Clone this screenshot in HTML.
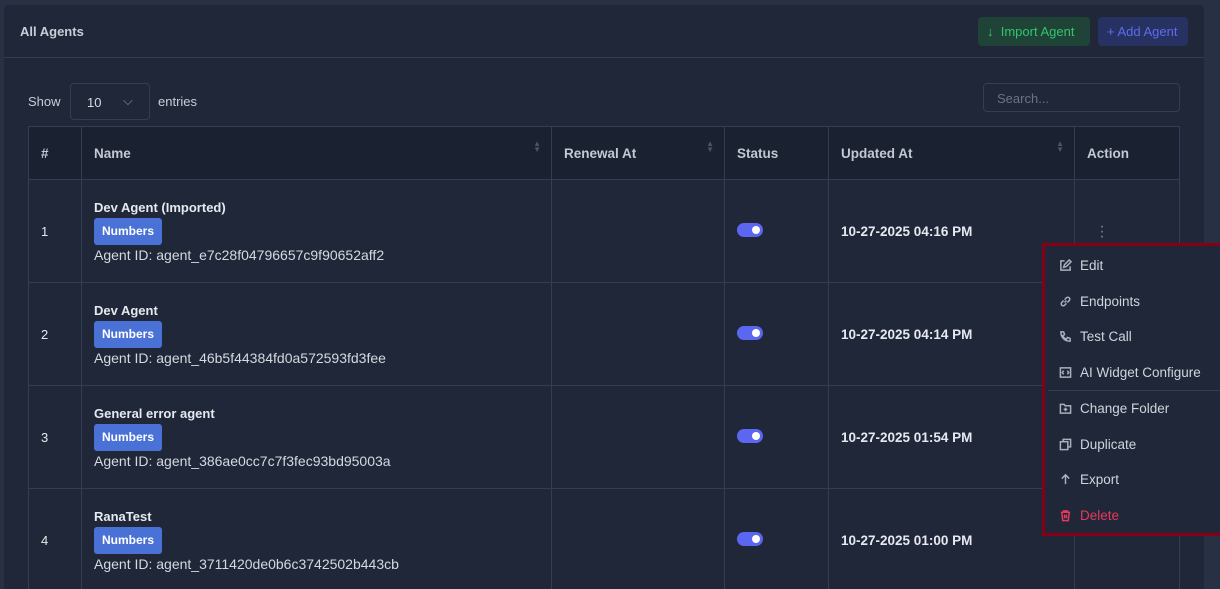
<!DOCTYPE html><html><head><style>
*{box-sizing:border-box;margin:0;padding:0}
html,body{width:1220px;height:589px;overflow:hidden}
body{background:#283143;font-family:"Liberation Sans",sans-serif;font-size:13px;color:#e6e9ef;position:relative}
.card{position:absolute;left:4px;top:5px;width:1200px;height:600px;background:#1f2738;border-radius:4px}
.hd{height:53px;border-bottom:1px solid #343e52;position:relative}
.hd h1{position:absolute;left:16px;top:19px;font-size:13px;font-weight:bold;color:#c9ced8}
.btn{position:absolute;top:12px;height:29px;border-radius:4px;font-size:13px;line-height:29px;padding:0 9px;white-space:nowrap}
.b1{left:974px;width:112px;background:#1f4437;color:#2fc56e}
.b2{left:1094px;width:90px;background:#283262;color:#5b6cf0}
.abs{position:absolute}
table{position:absolute;left:28px;top:126px;border-collapse:collapse;width:1152px;table-layout:fixed}
td,th{border:1px solid #343e52;text-align:left;padding:0 12px;vertical-align:middle}
th{height:53px;background:#1a2130;color:#c3c8d2;font-size:13.5px;position:relative}
td{height:103px;color:#e6e9ef;font-size:13px}
.nm{font-weight:bold;font-size:13px;margin-bottom:3px}
.tag{display:inline-block;background:#4a72d6;color:#fff;font-weight:bold;font-size:12px;padding:0 8px;height:27px;line-height:27px;border-radius:3px;margin-bottom:2px}
.id{color:#d5d9e0;font-size:14px}
.tg{width:26px;height:14px;border-radius:7px;background:#5b67f0;position:relative;display:inline-block}
.tg:after{content:"";position:absolute;right:3px;top:3px;width:8px;height:8px;border-radius:50%;background:#fff}
.dt{font-weight:bold;font-size:13.5px}
.sort{position:absolute;right:10px;top:14px;color:#4b5468;font-size:8px;line-height:6px}
.dots{color:#7d8596;font-size:16px;line-height:5px;text-align:center;width:6px}
.menu{position:absolute;left:1042px;top:243px;width:182px;height:293px;border:3px solid #860015;background:#1f2738}
.mi{position:absolute;left:14px;font-size:13.5px;color:#d0d4dc;display:flex;align-items:center;gap:8px}
.mi svg{width:13px;height:13px;stroke:#aab0bc;fill:none;stroke-width:1.6}
</style></head><body>
<div class="card">
<div class="hd"><h1>All Agents</h1>
<div class="btn b1">↓&nbsp; Import Agent</div><div class="btn b2">+ Add Agent</div></div>
</div>
<div class="abs" style="left:28px;top:94px;color:#c9ced8">Show</div>
<div class="abs" style="left:70px;top:83px;width:80px;height:37px;border:1px solid #343e52;border-radius:4px;padding:11px 16px;color:#d5d9e0">10<span style="position:absolute;left:52px;top:9px;color:#8d94a3">⌵</span></div>
<div class="abs" style="left:158px;top:94px;color:#c9ced8">entries</div>
<div class="abs" style="left:983px;top:83px;width:197px;height:29px;border:1px solid #343e52;border-radius:4px;padding:7px 13px;color:#6b7384">Search...</div>
<table>
<colgroup><col style="width:53px"><col style="width:470px"><col style="width:173px"><col style="width:104px"><col style="width:246px"><col></colgroup>
<tr><th>#</th><th>Name<span class="sort">▲<br>▼</span></th><th>Renewal At<span class="sort">▲<br>▼</span></th><th>Status</th><th>Updated At<span class="sort">▲<br>▼</span></th><th>Action</th></tr>
<tr><td>1</td><td><div class="nm">Dev Agent (Imported)</div><div class="tag">Numbers</div><div class="id">Agent ID: agent_e7c28f04796657c9f90652aff2</div></td><td></td><td><span class="tg"></span></td><td class="dt">10-27-2025 04:16 PM</td><td><div class="dots" style="margin-left:12px">·<br>·<br>·</div></td></tr>
<tr><td>2</td><td><div class="nm">Dev Agent</div><div class="tag">Numbers</div><div class="id">Agent ID: agent_46b5f44384fd0a572593fd3fee</div></td><td></td><td><span class="tg"></span></td><td class="dt">10-27-2025 04:14 PM</td><td></td></tr>
<tr><td>3</td><td><div class="nm">General error agent</div><div class="tag">Numbers</div><div class="id">Agent ID: agent_386ae0cc7c7f3fec93bd95003a</div></td><td></td><td><span class="tg"></span></td><td class="dt">10-27-2025 01:54 PM</td><td></td></tr>
<tr><td>4</td><td><div class="nm">RanaTest</div><div class="tag">Numbers</div><div class="id">Agent ID: agent_3711420de0b6c3742502b443cb</div></td><td></td><td><span class="tg"></span></td><td class="dt">10-27-2025 01:00 PM</td><td></td></tr>
</table>
<div class="menu">
<div class="mi" style="top:12px"><svg viewBox="0 0 14 14"><path d="M6 2H2v10h10V8M5 9l1-3 5-5 2 2-5 5z"/></svg>Edit</div>
<div class="mi" style="top:48px"><svg viewBox="0 0 14 14"><path d="M6 8l2-2M5 6L3 8a2 2 0 003 3l2-2M9 8l2-2a2 2 0 00-3-3L6 5"/></svg>Endpoints</div>
<div class="mi" style="top:83px"><svg viewBox="0 0 14 14"><path d="M2 2h3l1 3-2 1a7 7 0 004 4l1-2 3 1v3c-6 0-10-4-10-10z"/></svg>Test Call</div>
<div class="mi" style="top:119px"><svg viewBox="0 0 14 14"><rect x="1.5" y="2" width="11" height="10"/><path d="M5 5L3.5 7 5 9M9 5l1.5 2L9 9"/></svg>AI Widget Configure</div>
<div style="position:absolute;left:3px;right:0;top:144px;border-top:1px solid #343e52"></div>
<div class="mi" style="top:155px"><svg viewBox="0 0 14 14"><path d="M1.5 2.5h4l1 1.5h6v8h-11zM7 6v4M5 8h4"/></svg>Change Folder</div>
<div class="mi" style="top:191px"><svg viewBox="0 0 14 14"><rect x="1.5" y="4" width="8" height="8.5"/><path d="M4.5 4V1.5h8v8H9.5"/></svg>Duplicate</div>
<div class="mi" style="top:226px"><svg viewBox="0 0 14 14"><path d="M7 12V2M3 6l4-4 4 4"/></svg>Export</div>
<div class="mi" style="top:262px;color:#e8395a"><svg viewBox="0 0 14 14" style="stroke:#e8395a"><path d="M2 3.5h10M5 3.5V2h4v1.5M3 3.5l1 9h6l1-9M6 6v4M8 6v4"/></svg>Delete</div>
</div>
</body></html>
